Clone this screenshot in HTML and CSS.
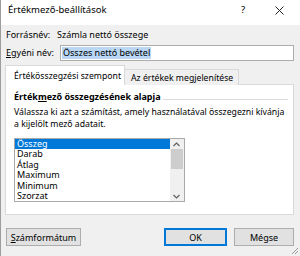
FILE: index.html
```html
<!DOCTYPE html>
<html lang="hu">
<head>
<meta charset="utf-8">
<title>Értékmező-beállítások</title>
<link rel="stylesheet" href="styles.css">
</head>
<body>
<div class="dialog">
  <div class="titlebar">
    <span class="title">Értékmező-beállítások</span>
    <span class="help">?</span>
    <span class="close"><svg width="9" height="9" viewBox="0 0 9 9"><path d="M0.5 0.5 L8.5 8.5 M8.5 0.5 L0.5 8.5" stroke="#222" stroke-width="1" fill="none"/></svg></span>
  </div>
  <div class="body">
    <div class="row src"><span class="lbl">Forrásnév:</span><span class="val">Számla nettó összege</span></div>
    <div class="row name"><span class="lbl2"><u>E</u>gyéni név:</span><div class="input"><span class="sel">Összes nettó bevétel</span></div></div>
    <div class="tabs">
      <div class="tab active">Értékösszegzési szempont</div>
      <div class="tab">Az értékek megjelenítése</div>
    </div>
    <div class="panel">
      <div class="group"><span class="gtitle">Érték<u>m</u>ező összegzésének alapja</span><span class="gline"></span></div>
      <p class="desc">Válassza ki azt a számítást, amely használatával összegezni kívánja<br>a kijelölt mező adatait.</p>
      <div class="listbox">
        <ul class="items">
          <li class="selected">Összeg</li>
          <li>Darab</li>
          <li>Átlag</li>
          <li>Maximum</li>
          <li>Minimum</li>
          <li>Szorzat</li>
        </ul>
        <div class="scrollbar">
          <svg class="arrow" width="13" height="9" viewBox="0 0 13 9"><path d="M3.5 6 L6.5 3 L9.5 6" stroke="#606060" stroke-width="1.2" fill="none"/></svg>
          <div class="thumb"></div>
          <div class="track"></div>
          <svg class="arrow" width="13" height="9" viewBox="0 0 13 9"><path d="M3.5 3 L6.5 6 L9.5 3" stroke="#606060" stroke-width="1.2" fill="none"/></svg>
        </div>
      </div>
    </div>
    <div class="footer">
      <button class="btn fmt"><u>S</u>zámformátum</button>
      <span class="spacer"></span>
      <button class="btn ok">OK</button>
      <button class="btn cancel">Mégse</button>
    </div>
  </div>
  <svg class="grip" width="8" height="8" viewBox="0 0 8 8"><path d="M7 1 L1 7 M7 4 L4 7" stroke="#9a9a9a" stroke-width="1"/></svg>
</div>
</body>
</html>
```
FILE: styles.css
```css
* { box-sizing: border-box; }
html, body { margin: 0; padding: 0; }
body {
  width: 300px;
  height: 256px;
  overflow: hidden;
  font-family: "Noto Sans", "Open Sans", sans-serif;
  font-size: 9px;
  color: #000;
}
u { text-decoration-thickness: 1px; text-underline-offset: 1px; }
.dialog {
  position: relative;
  width: 300px;
  height: 256px;
  background: #f0f0f0;
  border-left: 1px solid #9c9c9c;
  display: flex;
  flex-direction: column;
}
.titlebar {
  height: 25px;
  background: #fff;
  display: flex;
  align-items: flex-start;
  padding-top: 3px;
}
.title { margin-left: 7px; font-size: 9.5px; flex: 1; }
.help { width: 10px; margin-right: 27px; font-size: 9.5px; text-align: center; }
.close { width: 9px; margin-right: 16px; margin-top: 3px; display: flex; }
.body { flex: 1; display: flex; flex-direction: column; padding: 0 6px 0 3px; }
.row { display: flex; align-items: center; }
.src { height: 17px; margin-top: 1px; padding-left: 2px; }
.src .lbl { width: 51px; }
.name { height: 17px; margin-top: 1px; padding-left: 2px; }
.lbl2 { width: 54px; }
.input {
  flex: 1;
  height: 16px;
  border: 1px solid #adadad;
  background: #fff;
  display: flex;
  align-items: center;
  padding-left: 1px;
}
.sel { background: #b9d7f5; line-height: 12px; padding: 0 1px; }
.tabs { display: flex; align-items: flex-end; margin-top: 5px; height: 19px; position: relative; z-index: 1; margin-bottom: -1px; }
.tab {
  height: 16px;
  border: 1px solid #d9d9d9;
  border-bottom: none;
  background: #f0f0f0;
  padding: 0 5px 0 6px;
  display: flex;
  align-items: center;
  font-size: 8.7px;
  white-space: nowrap;
}
.tab.active {
  height: 20px;
  background: #fff;
  padding: 0 3px 0 8px;
  margin-left: 1px;
}
.tab + .tab { border-left: none; }
.panel {
  height: 131px;
  margin-left: 1px;
  background: #fff;
  border: 1px solid #d9d9d9;
  padding: 4px 5px 0 8px;
}
.group { display: flex; align-items: center; height: 14px; }
.gtitle { font-weight: bold; }
.gline { flex: 1; height: 1px; background: #dcdcdc; margin-left: 2px; margin-top: 6px; }
.desc { margin: 3px 0 0 0; line-height: 12px; white-space: nowrap; font-size: 8.7px; }
.listbox {
  width: 171px;
  height: 64px;
  margin-top: 8px;
  border: 1px solid #a9a9a9;
  display: flex;
}
.items { list-style: none; margin: 0; padding: 0; flex: 1; }
.items li { height: 10.4px; line-height: 10.4px; padding-left: 2px; }
.items li.selected { background: #0078d7; color: #fff; }
.scrollbar { width: 14px; background: #f0f0f0; display: flex; flex-direction: column; padding-top: 1px; }
.arrow { display: block; flex: none; }
.thumb { height: 20px; margin: 0 1px; background: #cdcdcd; flex: none; }
.track { flex: 1; }
.footer { display: flex; align-items: center; margin-top: 13px; padding-left: 2px; }
.spacer { flex: 1; }
.btn {
  font: inherit;
  height: 18px;
  background: #e1e1e1;
  border: 1px solid #adadad;
  padding: 0;
  color: #000;
}
.fmt { width: 75px; }
.ok { width: 63px; border-color: #0078d7; box-shadow: inset 0 0 0 1px #0078d7; }
.cancel { width: 60px; margin-left: 7px; }
.grip { position: absolute; right: 1px; bottom: 1px; }
```
